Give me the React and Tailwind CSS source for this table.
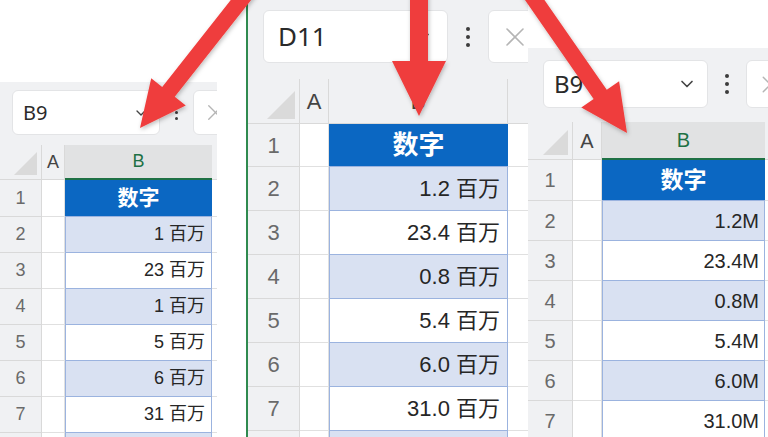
import { ChevronDown, X } from "lucide-react";

function arrowPoints(tail, tip, headLen, headHalf, shaftHalf) {
  const dx = tip[0] - tail[0];
  const dy = tip[1] - tail[1];
  const len = Math.hypot(dx, dy);
  const ux = dx / len;
  const uy = dy / len;
  const px = -uy;
  const py = ux;
  const bx = tip[0] - ux * headLen;
  const by = tip[1] - uy * headLen;
  const pts = [
    [tail[0] + px * shaftHalf, tail[1] + py * shaftHalf],
    [bx + px * shaftHalf, by + py * shaftHalf],
    [bx + px * headHalf, by + py * headHalf],
    tip,
    [bx - px * headHalf, by - py * headHalf],
    [bx - px * shaftHalf, by - py * shaftHalf],
    [tail[0] - px * shaftHalf, tail[1] - py * shaftHalf],
  ];
  return pts.map((p) => p.join(",")).join(" ");
}

function Dots({ c }) {
  return (
    <div className={`flex flex-col items-center justify-center ${c.gap}`}>
      <span className={`rounded-full bg-[#3c3c3c] ${c.dot}`} />
      <span className={`rounded-full bg-[#3c3c3c] ${c.dot}`} />
      <span className={`rounded-full bg-[#3c3c3c] ${c.dot}`} />
    </div>
  );
}

function Panel({ p }) {
  const c = p.cls;
  return (
    <div className={`flex flex-col overflow-hidden shrink-0 ${c.wrap}`}>
      <div className={`bg-white shrink-0 ${c.top}`} />
      <div className={`bg-[#f0f1f3] shrink-0 flex items-start overflow-hidden ${c.bar}`}>
        <div className={`bg-white rounded-md border border-[#e3e4e6] flex items-center justify-between shrink-0 text-[#2a2a2a] font-['Noto_Sans',sans-serif] ${c.box}`}>
          <span>{p.name}</span>
          <ChevronDown size={p.chev} strokeWidth={2} className="text-[#444]" />
        </div>
        <div className={`flex items-center justify-center shrink-0 ${c.dots}`}>
          <Dots c={c} />
        </div>
        <div className={`bg-white rounded-md border border-[#e3e4e6] flex items-center justify-center shrink-0 ${c.xbox}`}>
          <X size={p.xSize} strokeWidth={1.2} className="text-[#b5b5b5]" />
        </div>
      </div>
      <div className={`flex flex-col bg-white font-['Liberation_Sans','Noto_Sans_CJK_SC',sans-serif] ${c.grid}`}>
        <div className={`flex shrink-0 bg-[#f0f1f3] ${c.head}`}>
          <div className={`relative border-r border-b border-[#d9d9d9] ${c.c0}`}>
            <div className={`absolute right-1 bottom-1 bg-[#dadada] [clip-path:polygon(100%_0,100%_100%,0_100%)] ${c.tri}`} />
          </div>
          <div className={`flex items-center justify-center border-r border-b border-[#d9d9d9] text-[#444] ${c.c1}`}>
            A
          </div>
          {p.selB ? (
            <div className={`flex items-center justify-center bg-[#e1e2e3] border-b-2 border-[#1e7145] text-[#1e7145] ${c.c2}`}>
              B
            </div>
          ) : (
            <div className={`flex items-center justify-center border-r border-b border-[#d9d9d9] text-[#444] ${c.c2}`}>
              B
            </div>
          )}
          <div className="flex-1 border-b border-[#d9d9d9]" />
        </div>
        {p.rows.map((v, i) => (
          <div key={i} className={`flex shrink-0 ${i === 0 ? c.first : c.row}`}>
            <div className={`flex items-center justify-center bg-[#f0f1f3] border-r border-b border-[#d9d9d9] text-[#6a6a6a] ${c.c0}`}>
              {i < 7 ? i + 1 : ""}
            </div>
            <div className={`bg-white border-r border-b border-[#e0e0e0] ${c.c1}`} />
            {i === 0 ? (
              <div className={`flex items-center justify-center bg-[#0b67c2] text-white font-bold border-b border-[#9bb3df] ${c.c2} ${c.hdr}`}>
                数字
              </div>
            ) : (
              <div
                className={`flex items-center justify-end border-l border-b border-r border-[#9bb3df] text-[#262626] ${i % 2 === 1 ? "bg-[#d9e1f2]" : "bg-white"} ${c.c2} ${c.pad}`}
              >
                {v}
              </div>
            )}
            <div className="flex-1 border-b border-[#e0e0e0]" />
          </div>
        ))}
      </div>
    </div>
  );
}

const left = {
  name: "B9",
  selB: true,
  chev: 16,
  xSize: 27,
  cls: {
    wrap: "w-[246px]",
    top: "h-[82px]",
    bar: "h-[63px] w-[217px] pt-2 pl-3",
    box: "w-[148px] h-[45px] px-2.5 text-[20px]",
    dots: "w-[33px] h-[45px]",
    dot: "w-[3px] h-[3px]",
    gap: "gap-[3px]",
    xbox: "w-[45px] h-[45px]",
    grid: "w-[217px] text-[18px]",
    head: "h-[35px]",
    first: "h-[37px]",
    row: "h-[36px]",
    c0: "w-[42px]",
    c1: "w-[23px]",
    c2: "w-[147px]",
    pad: "pr-1.5",
    tri: "w-[23px] h-[23px]",
    hdr: "text-[21px]",
  },
  rows: ["", "1 百万", "23 百万", "1 百万", "5 百万", "6 百万", "31 百万", ""],
};

const middle = {
  name: "D11",
  selB: false,
  chev: 20,
  xSize: 32,
  cls: {
    wrap: "w-[280px]",
    top: "h-0",
    bar: "h-[79px] w-[280px] pt-2.5 pl-[15px]",
    box: "w-[185px] h-[53px] px-3.5 text-[26px]",
    dots: "w-[40px] h-[53px]",
    dot: "w-1 h-1",
    gap: "gap-1",
    xbox: "w-[53px] h-[53px]",
    grid: "w-[280px] text-[22px]",
    head: "h-[45px]",
    first: "h-[43px]",
    row: "h-[44px]",
    c0: "w-[52px]",
    c1: "w-[29px]",
    c2: "w-[179px]",
    pad: "pr-[7px]",
    tri: "w-[28px] h-[28px]",
    hdr: "text-[26px]",
  },
  rows: ["", "1.2 百万", "23.4 百万", "0.8 百万", "5.4 百万", "6.0 百万", "31.0 百万", ""],
};

const right = {
  name: "B9",
  selB: true,
  chev: 20,
  xSize: 29,
  cls: {
    wrap: "w-[240px]",
    top: "h-[48px]",
    bar: "h-[74px] w-[240px] pt-3 pl-[15px]",
    box: "w-[165px] h-[48px] px-2.5 text-[24px]",
    dots: "w-[38px] h-[48px]",
    dot: "w-1 h-1",
    gap: "gap-1",
    xbox: "w-[48px] h-[48px]",
    grid: "w-[240px] text-[20px]",
    head: "h-[38px]",
    first: "h-[41px]",
    row: "h-[40px]",
    c0: "w-[45px]",
    c1: "w-[29px]",
    c2: "w-[163px]",
    pad: "pr-[5px]",
    tri: "w-[25px] h-[25px]",
    hdr: "text-[23px]",
  },
  rows: ["", "1.2M", "23.4M", "0.8M", "5.4M", "6.0M", "31.0M", ""],
};

export default function App() {
  return (
    <div className="relative w-[768px] h-[437px] overflow-hidden bg-white flex">
      <Panel p={left} />
      <div className="w-[2px] bg-[#2f8a4f] shrink-0" />
      <Panel p={middle} />
      <Panel p={right} />
      <svg className="absolute inset-0 pointer-events-none" width="768" height="437" viewBox="0 0 768 437">
        <defs>
          <filter id="sh" x="-20%" y="-20%" width="140%" height="140%">
            <feDropShadow dx="1" dy="2" stdDeviation="2" floodColor="#000" floodOpacity="0.25" />
          </filter>
        </defs>
        <g fill="#ef3e3c" filter="url(#sh)">
          <polygon points={arrowPoints([252, -14], [140, 128], 46, 22, 8)} />
          <polygon points={arrowPoints([419, -12], [419, 116], 55, 27, 9)} />
          <polygon points={arrowPoints([525, -14], [627, 133], 47, 23, 8)} />
        </g>
      </svg>
    </div>
  );
}
